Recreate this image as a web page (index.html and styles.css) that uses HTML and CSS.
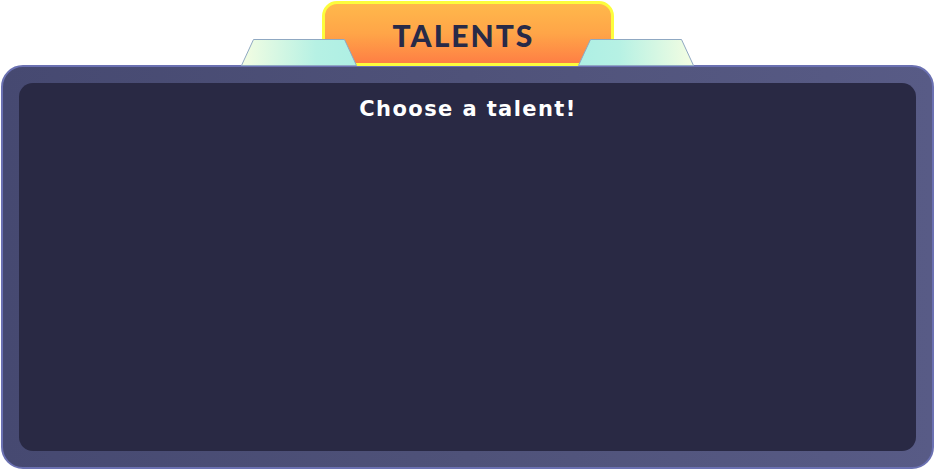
FILE: index.html
```html
<!DOCTYPE html>
<html>
<head>
<meta charset="utf-8">
<link rel="stylesheet" href="styles.css">
</head>
<body>
<div class="screen">
  <div class="header">
    <svg class="wing wing-left" width="117" height="27" viewBox="0 0 117 27">
      <defs>
        <linearGradient id="gl" x1="0" x2="1" y1="0" y2="0">
          <stop offset="0" stop-color="#f4fde2"/>
          <stop offset="0.65" stop-color="#b6f1e4"/>
          <stop offset="1" stop-color="#aeefe4"/>
        </linearGradient>
      </defs>
      <polygon points="12.5,0.5 103.5,0.5 115.5,26.5 0.5,26.5" fill="url(#gl)" stroke="#8fa8c2" stroke-width="1"/>
    </svg>
    <div class="tab"><span class="tab-title">TALENTS</span></div>
    <svg class="wing wing-right" width="117" height="27" viewBox="0 0 117 27">
      <defs>
        <linearGradient id="gr" x1="0" x2="1" y1="0" y2="0">
          <stop offset="0" stop-color="#aeefe4"/>
          <stop offset="0.35" stop-color="#b6f1e4"/>
          <stop offset="1" stop-color="#f4fde2"/>
        </linearGradient>
      </defs>
      <polygon points="12.5,0.5 103.5,0.5 115.5,26.5 0.5,26.5" fill="url(#gr)" stroke="#8fa8c2" stroke-width="1"/>
    </svg>
  </div>
  <div class="panel">
    <div class="panel-inner">
      <h2 class="prompt">Choose a talent!</h2>
    </div>
  </div>
</div>
</body>
</html>
```

FILE: styles.css
```css
html, body {
  margin: 0;
  padding: 0;
  background: #ffffff;
}
.screen {
  width: 935px;
  height: 470px;
  display: flex;
  flex-direction: column;
}
.header {
  height: 66px;
  display: flex;
  justify-content: center;
  align-items: flex-end;
  margin-bottom: -1px;
  position: relative;
  z-index: 2;
}
.wing {
  display: block;
  position: relative;
  z-index: 3;
  margin-bottom: 0;
}
.tab {
  width: 292px;
  height: 65px;
  margin: 0 -36px 0 -36px;
  box-sizing: border-box;
  border: 3px solid #fcfd3d;
  border-radius: 15px 15px 0 0;
  background: linear-gradient(180deg, #ffb84b 0%, #ffa548 50%, #fe7f44 100%);
  display: flex;
  justify-content: center;
  padding-top: 14px;
  padding-right: 8px;
  align-self: flex-start;
  margin-top: 1px;
}
.tab-title {
  font-family: "Lato", "Open Sans", sans-serif;
  font-weight: 900;
  font-size: 30px;
  line-height: 34px;
  letter-spacing: 2px;
  color: #282a48;
}
.panel {
  margin: 0 1px 1px 1px;
  flex: 1;
  box-sizing: border-box;
  border: 2px solid #6b71b2;
  border-radius: 22px;
  background: linear-gradient(90deg, #464971 0%, #4f5279 50%, #585b86 100%);
  padding: 16px;
  display: flex;
}
.panel-inner {
  flex: 1;
  background: #292944;
  border-radius: 14px;
  display: flex;
  flex-direction: column;
  align-items: center;
}
.prompt {
  margin: 12px 0 0 0;
  padding-left: 1px;
  font-family: "DejaVu Sans", "Open Sans", sans-serif;
  font-weight: 700;
  font-size: 21px;
  line-height: 28px;
  letter-spacing: 1.4px;
  color: #ffffff;
}
```
